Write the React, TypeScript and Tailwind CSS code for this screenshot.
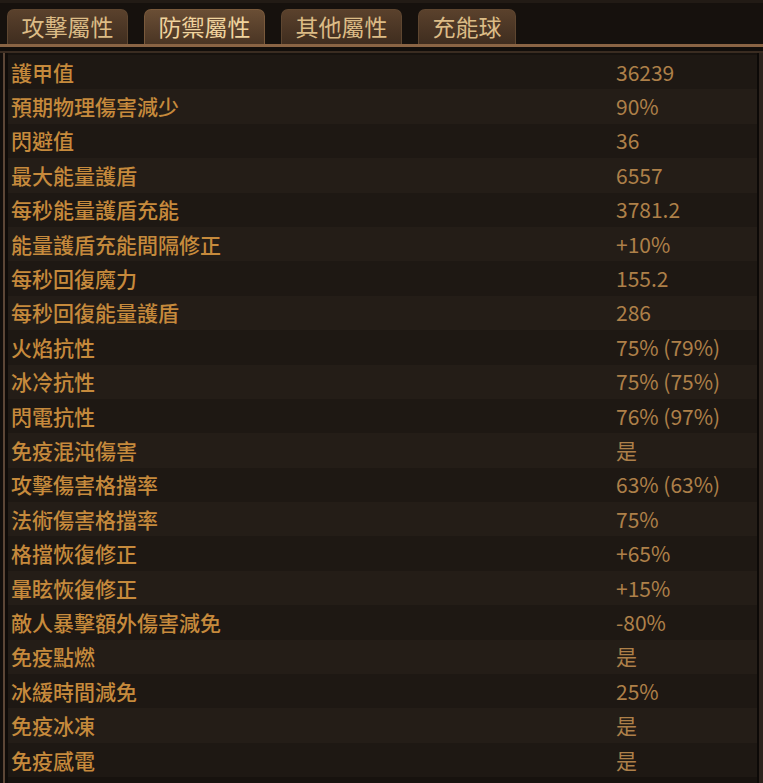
const font = {
  fontFamily: '"Noto Sans CJK TC", "Noto Sans", sans-serif',
};

const tabs = [
  { label: "攻擊屬性", width: "w-[121px]", active: false },
  { label: "防禦屬性", width: "w-[121px]", active: true },
  { label: "其他屬性", width: "w-[121px]", active: false },
  { label: "充能球", width: "w-[98px]", active: false },
];

const rows: [string, string][] = [
  ["護甲值", "36239"],
  ["預期物理傷害減少", "90%"],
  ["閃避值", "36"],
  ["最大能量護盾", "6557"],
  ["每秒能量護盾充能", "3781.2"],
  ["能量護盾充能間隔修正", "+10%"],
  ["每秒回復魔力", "155.2"],
  ["每秒回復能量護盾", "286"],
  ["火焰抗性", "75% (79%)"],
  ["冰冷抗性", "75% (75%)"],
  ["閃電抗性", "76% (97%)"],
  ["免疫混沌傷害", "是"],
  ["攻擊傷害格擋率", "63% (63%)"],
  ["法術傷害格擋率", "75%"],
  ["格擋恢復修正", "+65%"],
  ["暈眩恢復修正", "+15%"],
  ["敵人暴擊額外傷害減免", "-80%"],
  ["免疫點燃", "是"],
  ["冰緩時間減免", "25%"],
  ["免疫冰凍", "是"],
  ["免疫感電", "是"],
];

export default function App() {
  return (
    <div
      className="h-[783px] w-[763px] overflow-hidden bg-[#17120e]"
      style={font}
    >
      {/* tab strip */}
      <div className="border-t-[3px] border-[#221b15] bg-[#16110d] pt-[6px]">
        <div className="flex gap-[16px] pl-[7px]">
          {tabs.map((t) => (
            <div
              key={t.label}
              className={`${t.width} flex h-[35px] items-center justify-center rounded-t-[7px] border border-b-0 ${
                t.active
                  ? "border-[#7a5a3c] bg-gradient-to-b from-[#6a4e35] to-[#4a3524] text-[#f0d49e]"
                  : "border-[#5e4630] bg-gradient-to-b from-[#5a412c] to-[#3f2d1f] text-[#dcbc86]"
              } text-[23px] leading-none`}
            >
              <span className="-mt-[2px]">{t.label}</span>
            </div>
          ))}
        </div>
        <div className="h-[3px] bg-[#8a6444]" />
        <div className="h-[4px] bg-[#120e0b]" />
      </div>

      {/* panel */}
      <div className="flex h-full border-t-[2px] border-[#3a2c21]">
        <div className="w-[3px] bg-[#120e0b]" />
        <div className="w-[2px] bg-[#5c4636]" />
        <div className="w-[3px] bg-[#100c09]" />
        <div className="flex-1 pt-[2px]">
          {rows.map(([label, value], i) => (
            <div
              key={label}
              className={`flex h-[34.4px] items-center ${
                i % 2 === 0 ? "bg-[#1e1813]" : "bg-[#241d17]"
              }`}
            >
              <span className="w-[608px] pl-[3px] text-[21px] font-medium leading-none text-[#c68a3c]">
                {label}
              </span>
              <span className="text-[21px] leading-none text-[#ae8049]">
                {value}
              </span>
            </div>
          ))}
        </div>
        <div className="w-[2px] bg-[#0c0907]" />
        <div className="w-[4px] bg-[#2c231d]" />
      </div>
    </div>
  );
}
